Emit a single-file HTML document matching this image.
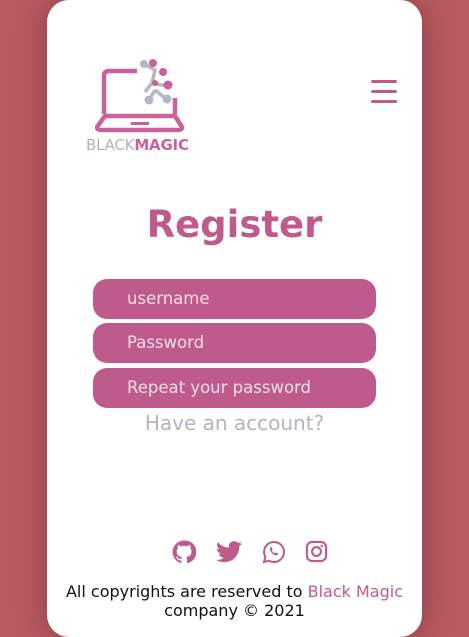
<!DOCTYPE html>
<html><head><style>
*{margin:0;padding:0;box-sizing:border-box}
body{width:469px;height:637px;background:#b95c62;font-family:"DejaVu Sans","Liberation Sans",sans-serif;overflow:hidden;position:relative}
.card{position:absolute;left:47px;top:0;width:375px;height:637px;background:#fff;border-radius:22px;box-shadow:0 0 30px rgba(80,20,30,.45)}
.f{position:absolute;left:93px;width:283px;height:40px;background:#bf5b8c;border-radius:14px;color:#f4dde8;font-size:16.5px;line-height:40px;padding-left:34px}
</style></head><body>
<div class="card"></div>
<svg style="position:absolute;left:95px;top:58px" width="90" height="76" viewBox="0 0 90 76">
<path d="M42 13 H14 Q9 13 9 18 V56 M80 40 V56" stroke="#c9619a" stroke-width="4.5" fill="none"/>
<path d="M2 69 L10 58 H80 L87 69 Q87 72 83 72 H6 Q2 72 2 69Z" stroke="#c9619a" stroke-width="4.5" fill="none"/>
<rect x="36" y="64" width="18" height="3" fill="#c9619a"/>
<path d="M49 6 L60 12 L57 25 L72 28 M57 25 L50 34 M60 32 L54 42 M60 32 L70 40" stroke="#b9b6c4" stroke-width="3.5" fill="none"/>
<g fill="#b9b6c4"><circle cx="49" cy="6" r="4"/><circle cx="54" cy="42" r="4.5"/><circle cx="72" cy="41" r="4.5"/></g>
<g fill="#c9619a"><circle cx="58" cy="5" r="4"/><circle cx="68" cy="14" r="4"/><circle cx="73" cy="27" r="4.5"/><circle cx="60" cy="25" r="3"/></g>
</svg>
<div style="position:absolute;left:86px;top:136px;font-size:15px;color:#b3b0c0;letter-spacing:-0.2px">BLACK<b style="color:#c9619a">MAGIC</b></div>
<div style="position:absolute;left:371px;top:80px;width:26px">
<div style="height:3px;background:#bf5b8c;border-radius:2px;margin-bottom:7px"></div>
<div style="height:3px;background:#bf5b8c;border-radius:2px;margin-bottom:7px"></div>
<div style="height:3px;background:#bf5b8c;border-radius:2px"></div></div>
<div style="position:absolute;left:47px;width:375px;top:203px;text-align:center;font-size:37px;font-weight:bold;color:#bf5b8c">Register</div>
<div class="f" style="top:279px">username</div>
<div class="f" style="top:323px">Password</div>
<div class="f" style="top:368px">Repeat your password</div>
<div style="position:absolute;left:47px;width:375px;top:411px;text-align:center;font-size:20px;color:#b3b3c6">Have an account?</div>
<svg style="position:absolute;left:172px;top:540px" width="24" height="24" viewBox="0 0 24 24"><path fill="#bf5b8c" d="M12 .5a11.5 11.5 0 0 0-3.6 22.4c.6.1.8-.3.8-.6v-2c-3.2.7-3.9-1.5-3.9-1.5-.5-1.3-1.3-1.7-1.3-1.7-1-.7.1-.7.1-.7 1.2.1 1.8 1.2 1.8 1.2 1 1.8 2.7 1.3 3.4 1 .1-.8.4-1.3.7-1.6-2.6-.3-5.3-1.3-5.3-5.7 0-1.3.5-2.3 1.2-3.1-.1-.3-.5-1.5.1-3.1 0 0 1-.3 3.2 1.2a11 11 0 0 1 5.8 0c2.2-1.5 3.2-1.2 3.2-1.2.6 1.6.2 2.8.1 3.1.8.8 1.2 1.8 1.2 3.1 0 4.4-2.7 5.4-5.3 5.7.4.4.8 1.1.8 2.2v3.3c0 .3.2.7.8.6A11.5 11.5 0 0 0 12 .5z"/></svg>
<svg style="position:absolute;left:216px;top:541px" width="26" height="22" viewBox="0 0 24 20"><path fill="#bf5b8c" d="M24 2.3c-.9.4-1.8.7-2.8.8 1-.6 1.8-1.6 2.2-2.7-1 .6-2 1-3.1 1.2A4.9 4.9 0 0 0 11.9 6 14 14 0 0 1 1.7.9a4.9 4.9 0 0 0 1.5 6.6c-.8 0-1.6-.3-2.2-.6 0 2.4 1.7 4.4 3.9 4.8-.7.2-1.5.2-2.2.1.6 2 2.4 3.4 4.6 3.4A9.9 9.9 0 0 1 0 17.2 14 14 0 0 0 7.5 19.4c9.1 0 14-7.5 14-14v-.6c1-.7 1.8-1.6 2.5-2.5z"/></svg>
<svg style="position:absolute;left:262px;top:540px" width="24" height="24" viewBox="0 0 24 24"><path fill="none" stroke="#bf5b8c" stroke-width="2" d="M12 2a10 10 0 0 0-8.6 15L2 22l5.1-1.3A10 10 0 1 0 12 2z"/><path fill="#bf5b8c" d="M8.5 7c.3-.3.8-.3 1 0l1 2c.1.3 0 .6-.2.8l-.6.6c.6 1.3 1.6 2.3 2.9 2.9l.6-.6c.2-.2.5-.3.8-.2l2 1c.3.2.3.7 0 1-.6.8-1.5 1.2-2.5.9-2.6-.8-4.7-2.9-5.5-5.5-.3-1 .1-1.9.5-2.9z"/></svg>
<svg style="position:absolute;left:305px;top:540px" width="23" height="23" viewBox="0 0 24 24"><rect x="2" y="2" width="20" height="20" rx="5.5" fill="none" stroke="#bf5b8c" stroke-width="2.2"/><circle cx="12" cy="12" r="4.6" fill="none" stroke="#bf5b8c" stroke-width="2.2"/><circle cx="17.6" cy="6.4" r="1.3" fill="#bf5b8c"/></svg>
<div style="position:absolute;left:47px;width:375px;top:582px;text-align:center;font-size:16px;line-height:19px;color:#111">All copyrights are reserved to <span style="color:#bf5b8c">Black Magic</span><br>company © 2021</div>
</body></html>
